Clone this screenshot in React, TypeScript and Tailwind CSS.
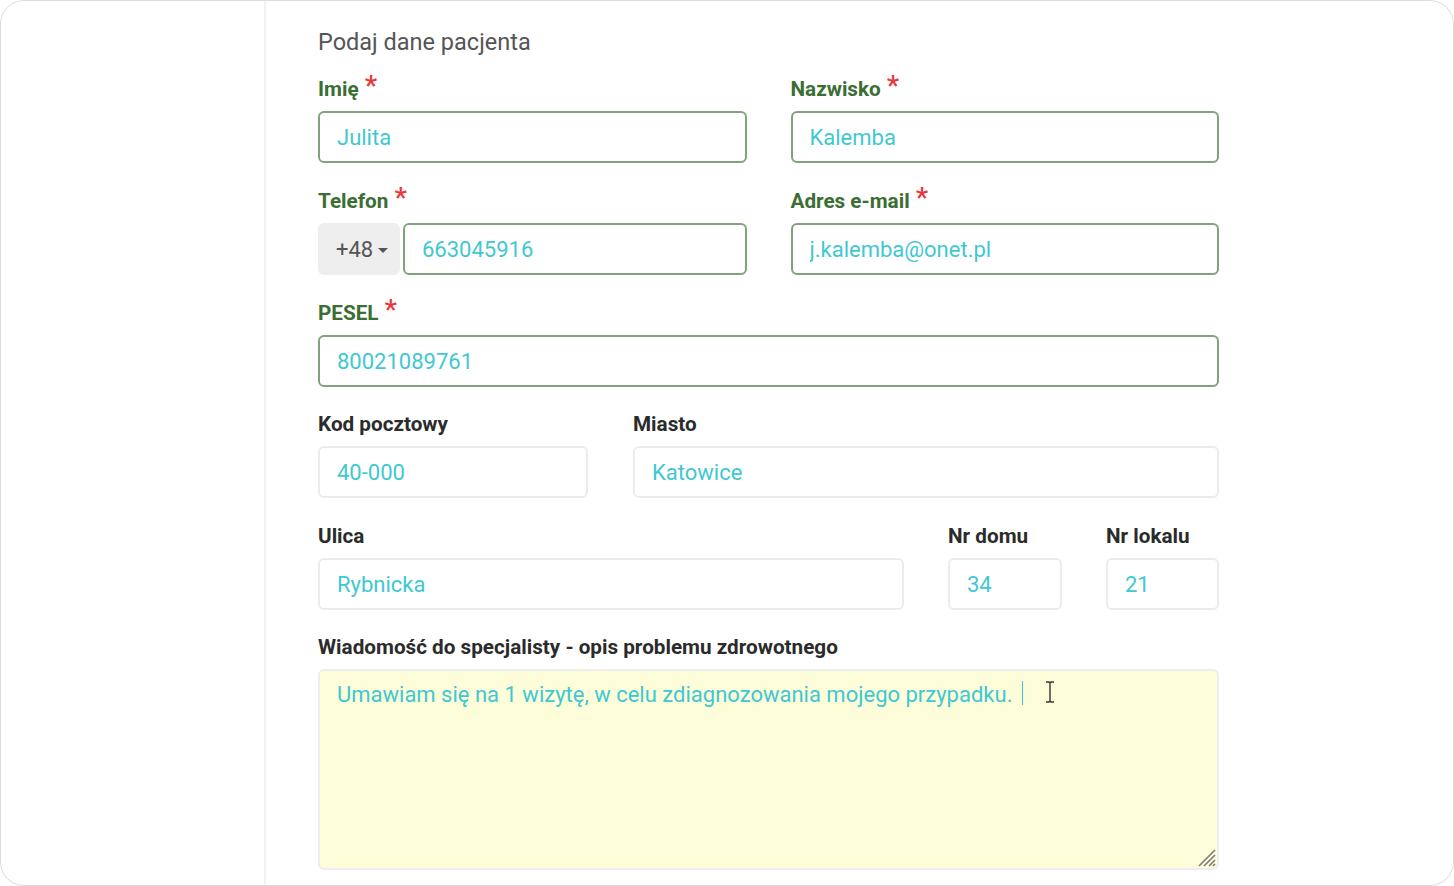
import React from 'react';

const font = { fontFamily: 'Roboto, "Liberation Sans", sans-serif' };

const Label = ({ text, required }: { text: string; required?: boolean }) => (
    <div
        className={`h-[28px] mb-[8px] flex items-start text-[20.7px] leading-[28px] font-bold ${
            required ? 'text-[#3b6e32]' : 'text-[#2b2b2b]'
        }`}
    >
        <span>{text}</span>
        {required && <span className="ml-[6px] text-[28px] leading-[22px] font-medium text-[#e8383b]">*</span>}
    </div>
);

const Field = ({
    value,
    required,
    className = ''
}: {
    value: string;
    required?: boolean;
    className?: string;
}) => (
    <input
        readOnly
        value={value}
        className={`h-[52px] w-full rounded-[6px] border-[2px] bg-white pl-[17px] text-[22px] text-[#3fc8d1] outline-none ${
            required ? 'border-[#7ea57a]' : 'border-[#e8ecef]'
        } ${className}`}
    />
);

const App = () => {
    return (
        <div className="w-[1454px] h-[886px] bg-white" style={font}>
            <div className="h-full w-full rounded-[24px] border border-[#dcdcdc] bg-white flex overflow-hidden">
                {/* left column */}
                <div className="w-[265px] shrink-0 border-r-2 border-[#f2f2f2]" />

                {/* form */}
                <div className="pl-[52px] pt-[27px] w-[953px]">
                    <h2 className="text-[23.5px] leading-[28px] text-[#555555] mb-[19px]">Podaj dane pacjenta</h2>

                    <div className="grid grid-cols-2 gap-x-[44px] mb-[24px]">
                        <div>
                            <Label text="Imię" required />
                            <Field value="Julita" required />
                        </div>
                        <div>
                            <Label text="Nazwisko" required />
                            <Field value="Kalemba" required />
                        </div>
                    </div>

                    <div className="grid grid-cols-2 gap-x-[44px] mb-[24px]">
                        <div>
                            <Label text="Telefon" required />
                            <div className="flex gap-[3px]">
                                <div className="h-[52px] w-[82px] shrink-0 rounded-[6px] bg-[#eeeeee] flex items-center pl-[18px] text-[22px] text-[#555555]">
                                    +48
                                    <svg width="12" height="7" viewBox="0 0 12 7" className="ml-[4px] mt-[3px]">
                                        <path d="M1 1h10L6 6z" fill="#555555" />
                                    </svg>
                                </div>
                                <Field value="663045916" required />
                            </div>
                        </div>
                        <div>
                            <Label text="Adres e-mail" required />
                            <Field value="j.kalemba@onet.pl" required />
                        </div>
                    </div>

                    <div className="mb-[23px]">
                        <Label text="PESEL" required />
                        <Field value="80021089761" required className="h-[51px]" />
                    </div>

                    <div className="flex gap-x-[45px] mb-[24px]">
                        <div className="w-[270px]">
                            <Label text="Kod pocztowy" />
                            <Field value="40-000" />
                        </div>
                        <div className="flex-1">
                            <Label text="Miasto" />
                            <Field value="Katowice" />
                        </div>
                    </div>

                    <div className="flex gap-x-[44px] mb-[23px]">
                        <div className="flex-1">
                            <Label text="Ulica" />
                            <Field value="Rybnicka" />
                        </div>
                        <div className="w-[114px]">
                            <Label text="Nr domu" />
                            <Field value="34" />
                        </div>
                        <div className="w-[113px]">
                            <Label text="Nr lokalu" />
                            <Field value="21" />
                        </div>
                    </div>

                    <div>
                        <Label text="Wiadomość do specjalisty - opis problemu zdrowotnego" />
                        <div className="relative">
                            <textarea
                                readOnly
                                value="Umawiam się na 1 wizytę, w celu zdiagnozowania mojego przypadku."
                                className="block h-[201px] w-full rounded-[6px] border-2 border-[#eeeeee] bg-[#fdfdda] pl-[17px] pt-[9px] text-[22px] leading-[30px] text-[#3fc8d1] outline-none resize-none"
                            />
                            {/* text caret */}
                            <div className="absolute left-[704px] top-[12px] h-[24px] w-[1px] bg-[#3fc8d1]" />
                            {/* mouse I-beam */}
                            <svg className="absolute left-[727px] top-[12px]" width="10" height="22" viewBox="0 0 10 22">
                                <path d="M1 1h3l1 1 1-1h3M5 2v18M1 21h3l1-1 1 1h3" stroke="#333" strokeWidth="1.4" fill="none" />
                            </svg>
                            {/* resize grip */}
                            <svg className="absolute right-[3px] bottom-[3px]" width="20" height="20" viewBox="0 0 20 20">
                                <path d="M19 3L3 19M19 8L8 19M19 13L13 19M19 17L17 19" stroke="#7a7a7a" strokeWidth="1.6" />
                            </svg>
                        </div>
                    </div>
                </div>
            </div>
        </div>
    );
};

export default App;
